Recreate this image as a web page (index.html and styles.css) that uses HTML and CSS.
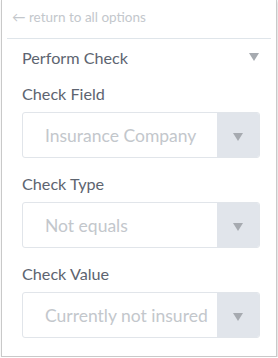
FILE: index.html
```html
<!DOCTYPE html>
<html lang="en">
  <head>
    <meta charset="UTF-8" />
    <meta name="viewport" content="width=device-width, initial-scale=1.0" />
    <link rel="stylesheet" href="styles.css">
  </head>
  <body>
    <div class="panel">
      <div class="back">
        <span class="back-arrow">&larr;</span> return to all options
      </div>

      <div class="section">
        <span>Perform Check</span>
        <span class="caret"></span>
      </div>

      <div class="field">
        <div class="label">Check Field</div>
        <div class="select">
          <div class="value">Insurance Company</div>
          <div class="toggle"><span class="caret"></span></div>
        </div>
      </div>

      <div class="field">
        <div class="label">Check Type</div>
        <div class="select">
          <div class="value">Not equals</div>
          <div class="toggle"><span class="caret"></span></div>
        </div>
      </div>

      <div class="field">
        <div class="label">Check Value</div>
        <div class="select">
          <div class="value">Currently not insured</div>
          <div class="toggle"><span class="caret"></span></div>
        </div>
      </div>
    </div>
  </body>
</html>
```

FILE: styles.css
```css
body {
  font-family: Lato, "Open Sans", sans-serif;
  margin: 0;
  background-color: #fff;
}

.panel {
  width: 274px;
  height: 356px;
  margin: -1px 0 0 1px;
  border: 1px solid #c9c9c9;
  box-shadow: 1px 2px 3px rgba(0, 0, 0, 0.15);
  background-color: #fff;
}

.back {
  margin: 0 5px;
  padding: 9px 5px 0;
  height: 29px;
  border-bottom: 1px solid #dfe5ea;
  font-size: 13.5px;
  color: #c3c7cc;
}

.section {
  display: flex;
  justify-content: space-between;
  align-items: center;
  padding: 3px 17px 0 20px;
  height: 30px;
  font-size: 16.2px;
  color: #5d6470;
}

.caret {
  display: inline-block;
  width: 0;
  height: 0;
  border-left: 5px solid transparent;
  border-right: 5px solid transparent;
  border-top: 8px solid #a6aab0;
}

.field {
  padding: 0 16px 0 20px;
}

.label {
  font-size: 16.2px;
  color: #5d6470;
  height: 20px;
  padding-top: 12px;
  margin-bottom: 8px;
}

.select {
  display: flex;
  height: 44px;
  border: 1px solid #e1e5ea;
  border-radius: 3px;
  overflow: hidden;
  margin-bottom: 4px;
}

.value {
  flex: 1;
  display: flex;
  align-items: center;
  padding-left: 22px;
  font-size: 17.5px;
  color: #c3c7cc;
}

.toggle {
  width: 42px;
  background-color: #e1e5eb;
  display: flex;
  align-items: center;
  justify-content: center;
}

.toggle .caret {
  margin-top: 4px;
}
```
